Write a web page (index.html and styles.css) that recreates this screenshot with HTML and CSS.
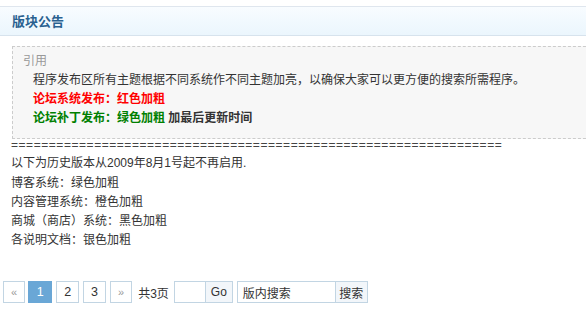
FILE: index.html
```html
<!DOCTYPE html>
<html lang="zh">
<head>
<meta charset="utf-8">
<title>版块公告</title>
<link rel="stylesheet" href="styles.css">
</head>
<body>
<div class="page">
  <div class="bar"><h2 class="bar-title">版块公告</h2></div>
  <div class="notice">
    <div class="quote">
      <div class="quote-label">引用</div>
      <div class="quote-body">
        <div>程序发布区所有主题根据不同系统作不同主题加亮，以确保大家可以更方便的搜索所需程序。</div>
        <div><strong class="red">论坛系统发布：红色加粗</strong></div>
        <div><strong class="green">论坛补丁发布：绿色加粗</strong> <strong class="dark">加最后更新时间</strong></div>
      </div>
    </div>
    <div class="sep">=================================================================</div>
    <div class="line first">以下为历史版本从2009年8月1号起不再启用.</div>
    <div class="line">博客系统：绿色加粗</div>
    <div class="line">内容管理系统：橙色加粗</div>
    <div class="line">商城（商店）系统：黑色加粗</div>
    <div class="line">各说明文档：银色加粗</div>
  </div>
  <div class="pager">
    <a class="pg arrow">«</a>
    <strong class="pg current">1</strong>
    <a class="pg">2</a>
    <a class="pg">3</a>
    <a class="pg arrow">»</a>
    <span class="total">共3页</span>
    <span class="jump"><span class="jump-input"></span><span class="btn go">Go</span></span>
    <span class="search"><span class="search-input">版内搜索</span><span class="btn find">搜索</span></span>
  </div>
</div>
</body>
</html>
```
FILE: styles.css
```css
html, body {
  margin: 0;
  padding: 0;
  overflow: hidden;
  background: #fff;
}
body {
  font-family: "Liberation Sans", "Noto Sans CJK SC", sans-serif;
  font-size: 12px;
  color: #333;
}
.page {
  width: 586px;
  height: 309px;
  overflow: hidden;
}
.bar {
  margin-top: 6px;
  height: 28px;
  border-top: 1px solid #dfe6ee;
  border-bottom: 1px solid #d7e3ed;
  background: linear-gradient(#f8fcff, #ebf6fd);
  display: flex;
  align-items: center;
  padding-left: 12px;
}
.bar-title {
  margin: 0;
  font-size: 13px;
  font-weight: bold;
  color: #2a6190;
  font-family: "Noto Sans CJK SC", sans-serif;
  line-height: 16px;
}
.notice {
  padding-left: 11px;
  margin-top: 10px;
}
.quote {
  margin-left: 1px;
  margin-right: -20px;
  border: 1px dashed #cccccc;
  background: #f7f7f7;
  padding: 5px 10px 10px 10px;
  line-height: 19px;
}
.quote-label {
  color: #999;
}
.quote-body {
  padding-left: 10px;
  color: #333;
}
.red { color: #ff0000; }
.green { color: #008000; }
.dark { color: #333; }
.sep {
  line-height: 13px;
  height: 13px;
  color: #444;
  white-space: nowrap;
  overflow: hidden;
  width: 491px;
  letter-spacing: 0.55px;
}
.line {
  line-height: 19px;
  color: #333;
}
.line.first {
  line-height: 22px;
}
.pager {
  display: flex;
  align-items: center;
  margin-top: 31px;
  margin-left: 3px;
  height: 22px;
}
.pg {
  box-sizing: border-box;
  height: 22px;
  min-width: 22px;
  padding: 0 7px;
  border: 1px solid #c2d5e3;
  background: #fff;
  color: #333;
  display: flex;
  align-items: center;
  justify-content: center;
  margin-right: 4px;
  font-weight: normal;
  font-size: 12.5px;
}
.pg.current {
  background: #6aa7d6;
  border-color: #6aa7d6;
  color: #fff;
  min-width: 24px;
  margin-left: -1px;
}
.pg.arrow {
  color: #999;
  font-size: 11px;
}
.total {
  margin: 0 5px 0 2px;
  color: #333;
}
.jump, .search {
  display: flex;
  height: 22px;
}
.jump { margin-right: 4px; }
.jump-input {
  box-sizing: border-box;
  width: 32px;
  height: 22px;
  border: 1px solid #c2d5e3;
  background: #fff;
}
.btn {
  box-sizing: border-box;
  height: 22px;
  border: 1px solid #c2d5e3;
  border-left: none;
  background: #f2f6fa;
  color: #333;
  display: flex;
  align-items: center;
  justify-content: center;
}
.go { width: 27px; }
.find { width: 32px; }
.search-input {
  box-sizing: border-box;
  width: 99px;
  height: 22px;
  border: 1px solid #c2d5e3;
  background: #fff;
  color: #333;
  padding-left: 5px;
  display: flex;
  align-items: center;
}
```
